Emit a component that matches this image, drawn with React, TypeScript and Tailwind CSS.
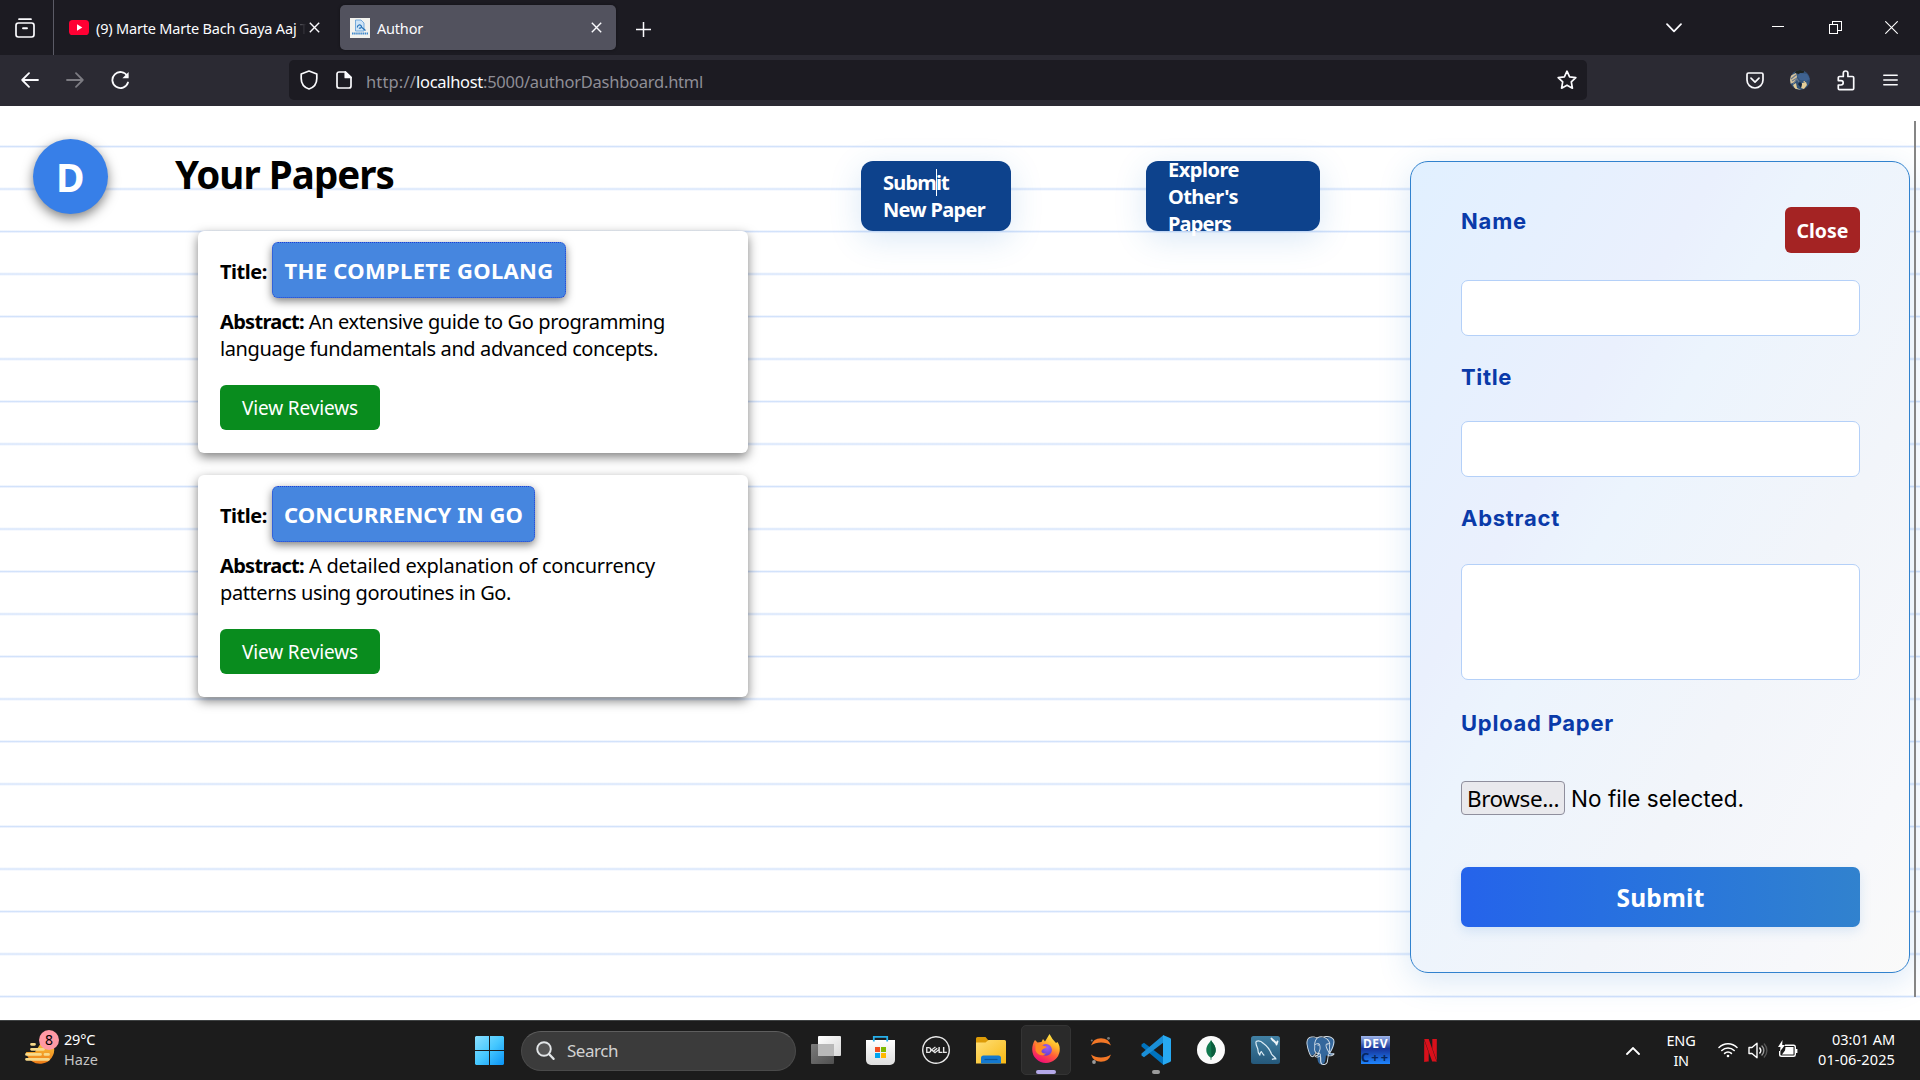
import { useLayoutEffect, useRef } from "react";
import type { ReactNode } from "react";
import { SiDell, SiNetflix, SiPostgresql } from "react-icons/si";

/** One line of text whose tracking is adjusted so that it spans `w` pixels. */
function Fit({ children, w, className = "" }: { children: ReactNode; w: number; className?: string }) {
  const ref = useRef<HTMLSpanElement>(null);
  useLayoutEffect(() => {
    const el = ref.current;
    if (!el) return;
    el.style.letterSpacing = "0px";
    const natural = el.getBoundingClientRect().width;
    const n = (el.textContent || "").length;
    el.style.letterSpacing = `${(w - natural) / n}px`;
  }, [w]);
  return (
    <span ref={ref} className={`inline-block whitespace-pre ${className}`}>
      {children}
    </span>
  );
}

const NOTO = "font-['Noto_Sans','Open_Sans',sans-serif]";
const INTER = "font-['Inter',sans-serif]";

function TabBar() {
  return (
    <div className="flex h-[55px] items-center bg-[#1c1b22] text-[#fbfbfe]">
      <div className="flex h-full w-[54px] items-center border-r border-[#5b5b66] pl-[15px]">
        <svg width="20" height="20" viewBox="0 0 20 20" fill="none" stroke="currentColor" strokeWidth="1.7" strokeLinecap="round" className="mt-[1px]">
          <path d="M4 1.2h12" />
          <rect x="1" y="5" width="18" height="14" rx="2.4" />
          <path d="M8 10.2h4" strokeWidth="1.9" />
        </svg>
      </div>
      <div className="flex h-full w-[286px] items-center pl-[15px]">
        <svg width="20" height="15" viewBox="0 0 20 15">
          <rect width="20" height="15" rx="3.6" fill="#ff0033" />
          <path d="M8 4.3v6.4l5.3-3.2z" fill="#fff" />
        </svg>
        <div className="ml-[7px] flex w-[211px] pt-[1px] text-[14.500px] leading-[20px]">
          <Fit w={204}>(9) Marte Marte Bach Gaya Aaj </Fit>
          <span className="bg-linear-to-r from-[#5a5960] to-[#1c1b22] to-80% bg-clip-text text-transparent">T</span>
        </div>
        <svg width="11" height="11" viewBox="0 0 11 11" stroke="currentColor" strokeWidth="1.4" className="ml-[2px]">
          <path d="M.8.8l9.4 9.4M10.2.8L.8 10.2" />
        </svg>
      </div>
      <div className="flex h-[45px] w-[276px] items-center rounded-[5px] bg-[#52525e] pl-[10px] pr-[14px] shadow-[0_0_3px_rgba(0,0,0,0.4)]">
        <svg width="20" height="20" viewBox="0 0 20 20">
          <rect width="20" height="20" fill="#f2f2ee" />
          <path d="M5.5 2h5.500l3 3v8H5.5z" fill="#cfe4f6" stroke="#5b9bd5" strokeWidth=".8" />
          <path d="M7.500 9.500a2 2 0 114-1c0 1.500-1.500 2-2.500 1.500M12 9.500l3.500 3" fill="none" stroke="#2673b8" strokeWidth="1.200" />
          <path d="M2 15.500h16" stroke="#3f88cb" strokeWidth="1.800" strokeDasharray="1.500 .6" />
        </svg>
        <Fit w={46} className="ml-[7px] pt-[1px] text-[14.500px] leading-[20px]">Author</Fit>
        <svg width="11" height="11" viewBox="0 0 11 11" stroke="currentColor" strokeWidth="1.4" className="ml-auto">
          <path d="M.8.8l9.4 9.4M10.2.8L.8 10.2" />
        </svg>
      </div>
      <svg width="15" height="15" viewBox="0 0 15 15" stroke="currentColor" strokeWidth="1.500" className="ml-[20px] mt-[3px]">
        <path d="M7.500 0v15M0 7.500h15" />
      </svg>
      <div className="ml-auto flex items-center pr-[22px]">
        <svg width="16" height="10" viewBox="0 0 16 10" fill="none" stroke="currentColor" strokeWidth="1.700" strokeLinecap="round" strokeLinejoin="round">
          <path d="M1 1.200l7 7.200 7-7.200" />
        </svg>
        <div className="ml-[90px] mb-[2px] h-px w-[12px] bg-white" />
        <svg width="13" height="13" viewBox="0 0 13 13" fill="none" stroke="#fff" className="ml-[45px]" shapeRendering="crispEdges">
          <path d="M.5 3.500h8v9h-8zM3.500 3.500v-3h9v9h-4" />
        </svg>
        <svg width="13" height="13" viewBox="0 0 13 13" stroke="#fff" strokeWidth="1.100" className="ml-[43px]">
          <path d="M.3.300l12.400 12.400M12.700.300L.300 12.700" />
        </svg>
      </div>
    </div>
  );
}

function NavBar() {
  return (
    <div className="flex h-[51px] items-center bg-[#2b2a33] pb-[1px] text-[#fbfbfe]">
      <svg width="18" height="16" viewBox="0 0 18 16" fill="none" stroke="currentColor" strokeWidth="1.800" strokeLinecap="round" strokeLinejoin="round" className="ml-[21px]">
        <path d="M17 8H1.200M8 1.200L1.200 8 8 14.800" />
      </svg>
      <svg width="18" height="16" viewBox="0 0 18 16" fill="none" stroke="#7c7b82" strokeWidth="1.800" strokeLinecap="round" strokeLinejoin="round" className="ml-[27px]">
        <path d="M1 8h15.800M10 1.200L16.800 8 10 14.800" />
      </svg>
      <svg width="19" height="19" viewBox="0 0 19 19" fill="none" stroke="currentColor" strokeWidth="1.800" strokeLinecap="round" className="ml-[27px]">
        <path d="M16.300 5A8 8 0 1017 11.500" />
        <path d="M17.600 1v6.200h-6.200z" fill="currentColor" stroke="none" />
      </svg>
      <div className="ml-[159px] flex h-[40px] w-[1298px] items-center rounded-[5px] bg-[#1c1b22] pl-[11px] pr-[10px]">
        <svg width="18" height="20" viewBox="0 0 18 20" fill="none" stroke="currentColor" strokeWidth="1.700" strokeLinejoin="round">
          <path d="M9 1l7.800 3v4.500C16.800 13.500 13.500 17.500 9 19 4.500 17.500 1.200 13.500 1.200 8.500V4z" />
        </svg>
        <svg width="16" height="18" viewBox="0 0 16 18" fill="none" stroke="currentColor" strokeWidth="1.700" strokeLinejoin="round" className="ml-[18px]">
          <path d="M3 1h6.500L15 6.300V15a2 2 0 01-2 2H3a2 2 0 01-2-2V3a2 2 0 012-2z" />
          <path d="M9.300 1v5.500H15z" fill="currentColor" />
        </svg>
        <span className="ml-[14px] pt-[4px] text-[16.500px] leading-[22px] text-[#8f8e96]">
          <Fit w={50}>http://</Fit>
          <Fit w={67} className="text-[#fbfbfe]">localhost</Fit>
          <Fit w={220}>:5000/authorDashboard.html</Fit>
        </span>
        <svg width="20" height="20" viewBox="0 0 20 20" fill="none" stroke="currentColor" strokeWidth="1.700" strokeLinejoin="round" className="ml-auto">
          <path d="M10 1.200l2.600 5.600 6.200.8-4.500 4.300 1.100 6.300L10 15.200l-5.400 3 1.100-6.300L1.200 7.600l6.200-.8z" />
        </svg>
      </div>
      <svg width="18" height="17" viewBox="0 0 18 17" fill="none" stroke="currentColor" strokeWidth="1.700" strokeLinecap="round" strokeLinejoin="round" className="ml-[159px]">
        <path d="M2.500 1h13A1.500 1.500 0 0117 2.500V8a8 8 0 01-16 0V2.500A1.500 1.500 0 012.500 1z" />
        <path d="M5 6.200l4 3.900 4-3.900" />
      </svg>
      <svg width="20" height="20" viewBox="0 0 20 20" className="ml-[26px]">
        <clipPath id="av"><circle cx="10" cy="10" r="10" /></clipPath>
        <g clipPath="url(#av)">
          <rect width="20" height="20" fill="#345479" />
          <path d="M6 0h8v2.500L9 4 5 3z" fill="#1f2420" />
          <path d="M0 6l6-3 1 4-2 5-5 2z" fill="#d6c39b" />
          <path d="M7 6l3-3 7 1 3 5-4 2-6-1z" fill="#3f6390" />
          <path d="M1 9l5-4M2 11l5-3M3 14l4-5 2 3" stroke="#6a7a8c" strokeWidth="1.200" fill="none" />
          <path d="M3 15l3-2 1 5 4 2-6-1zM12 13l4-1 1 3-3 4-3-1z" fill="#e3cd97" />
          <path d="M8 14l2-2 2 2-1 4z" fill="#15263c" />
          <path d="M13 11l2 0 0 2z" fill="#c9b787" />
        </g>
      </svg>
      <svg width="18" height="21" viewBox="0 0 18 21" fill="none" stroke="currentColor" strokeWidth="1.700" strokeLinejoin="round" className="ml-[27px]">
        <path d="M2.500 6.500H6.300V3.300a2.300 2.300 0 014.600 0V6.500H15.500a1.200 1.200 0 011.200 1.200V18.500a1.200 1.200 0 01-1.200 1.200H2.500a1.200 1.200 0 01-1.200-1.200V15H4a2.200 2.200 0 000-4.400H1.300V7.700A1.200 1.200 0 012.500 6.500z" />
      </svg>
      <svg width="15" height="12" viewBox="0 0 15 12" stroke="currentColor" strokeWidth="1.500" strokeLinecap="round" className="mb-[1px] ml-[28px]">
        <path d="M.8 1.200h13.400M.8 6h13.400M.8 10.800h13.400" />
      </svg>
    </div>
  );
}

type Paper = { title: string; titleW: number; pillW: string; lines: [string, number][] };

const papers: Paper[] = [
  {
    title: "THE COMPLETE GOLANG",
    titleW: 269,
    pillW: "w-[294px]",
    lines: [
      [" An extensive guide to Go programming", 361],
      ["language fundamentals and advanced concepts.", 438],
    ],
  },
  {
    title: "CONCURRENCY IN GO",
    titleW: 239,
    pillW: "w-[263px]",
    lines: [
      [" A detailed explanation of concurrency", 351],
      ["patterns using goroutines in Go.", 291],
    ],
  },
];

function PaperCard({ paper }: { paper: Paper }) {
  return (
    <article className="h-[222px] w-[550px] rounded-[6px] bg-white pl-[22px] pt-[11px] shadow-[0_4px_11px_rgba(0,0,0,0.5)]">
      <div className="flex items-center">
        <Fit w={47} className="pt-[2px] text-[20px] font-bold leading-[27px]">Title:</Fit>
        <div className={`ml-[5px] flex h-[56px] items-center justify-center rounded-[6px] border border-dotted border-[#1d3fd8] bg-[#4686df] pt-[1px] text-white shadow-[0_3px_8px_rgba(0,0,0,0.5)] ${paper.pillW}`}>
          <Fit w={paper.titleW} className="text-[22px] font-bold leading-[27px]">{paper.title}</Fit>
        </div>
      </div>
      <p className="mt-[10px] text-[20px] leading-[27px]">
        <Fit w={84} className="font-bold">Abstract:</Fit>
        <Fit w={paper.lines[0][1]}>{paper.lines[0][0]}</Fit>
        <br />
        <Fit w={paper.lines[1][1]}>{paper.lines[1][0]}</Fit>
      </p>
      <button className="mt-[23px] flex h-[45px] w-[160px] items-center justify-center rounded-[6px] bg-[#098c1e] pt-[2px] text-[19px] text-white">
        <Fit w={116}>View Reviews</Fit>
      </button>
    </article>
  );
}

function FieldLabel({ children, w }: { children: string; w: number }) {
  return (
    <Fit w={w} className="pt-[1px] text-[22px] font-bold leading-[27px] text-[#0a3aa9]">{children}</Fit>
  );
}

function PaperForm() {
  return (
    <form
      className={`ml-[90px] mt-[55px] flex h-[812px] w-[500px] shrink-0 flex-col rounded-[18px] border border-[#3182ce] pl-[50px] pr-[49px] pt-[45px] shadow-[0_8px_32px_rgba(49,130,206,0.18)] bg-[linear-gradient(120deg,#e1f0ff_0%,#eaf0fd_32%,#ecf4fd_42%,#f2f5fa_66%,#f7f8fb_88%,#fafaf9_100%)] ${INTER}`}
    >
      <div className="flex h-[46px] items-start justify-between">
        <FieldLabel w={66}>Name</FieldLabel>
        <button type="button" className={`flex h-[46px] w-[75px] items-center justify-center rounded-[6px] bg-[#a42323] pt-[1px] text-[19.500px] font-bold text-white ${NOTO}`}>
          <Fit w={52}>Close</Fit>
        </button>
      </div>
      <div className="mt-[27px] h-[56px] shrink-0 rounded-[7px] border border-[#b4d0f8] bg-white" />
      <div className="mt-[27px] h-[27px]"><FieldLabel w={51}>Title</FieldLabel></div>
      <div className="mt-[31px] h-[56px] shrink-0 rounded-[7px] border border-[#b4d0f8] bg-white" />
      <div className="mt-[27px] h-[27px]"><FieldLabel w={99}>Abstract</FieldLabel></div>
      <div className="mt-[33px] h-[116px] shrink-0 rounded-[7px] border border-[#b4d0f8] bg-white" />
      <div className="mt-[29px] h-[27px]"><FieldLabel w={153}>Upload Paper</FieldLabel></div>
      <div className="mt-[45px] flex h-[34px] items-center text-[22.500px] leading-[30px] text-black">
        <div className={`flex h-[34px] w-[104px] items-center justify-center rounded-[4px] border border-[#8f8f9d] bg-[#e9e9ed] pt-[1px] ${NOTO}`}>
          <Fit w={92}>Browse...</Fit>
        </div>
        <Fit w={173} className="ml-[6px] pt-[2px]">No file selected.</Fit>
      </div>
      <button type="button" className={`mt-[52px] flex h-[60px] shrink-0 items-center justify-center rounded-[7px] bg-linear-to-r from-[#2563eb] to-[#3182ce] pt-[3px] text-[24.500px] font-bold text-white shadow-[0_4px_12px_rgba(49,130,206,0.15)] ${NOTO}`}>
        <Fit w={88}>Submit</Fit>
      </button>
    </form>
  );
}

function Page() {
  return (
    <main
      className="relative flex h-[914px] items-start overflow-hidden bg-white text-black bg-[position:0_39px] bg-[size:100%_42.5px] bg-[linear-gradient(transparent_0px,#d2e2fb_1.5px,#dbe8fc_2px,transparent_3px)]"
    >
      <div className="ml-[33px] mt-[33px] flex h-[75px] w-[75px] shrink-0 items-center justify-center rounded-full bg-[#377fe8] pt-[1px] text-[39px] font-bold text-white shadow-[0_4px_12px_rgba(0,0,0,0.5)]">
        <Fit w={29}>D</Fit>
      </div>
      <section className="ml-[67px] mt-[44px] w-[573px] shrink-0">
        <h1 className="h-[48px] text-[38.500px] font-bold leading-[49px]"><Fit w={219}>Your Papers</Fit></h1>
        <div className="ml-[23px] mt-[33px] flex flex-col gap-[22px]">
          {papers.map((p) => <PaperCard key={p.title} paper={p} />)}
        </div>
      </section>
      <button className="relative ml-[113px] mt-[55px] flex h-[70px] w-[150px] shrink-0 flex-col items-start justify-center rounded-[12px] bg-[#0d428c] pl-[22px] text-[20px] font-bold leading-[27px] text-white shadow-[0_8px_32px_rgba(49,130,206,0.18)]">
        <Fit w={66}>Submit</Fit>
        <Fit w={102}>New Paper</Fit>
        <span className="absolute left-[75px] top-[8px] h-[27px] w-px bg-white" />
      </button>
      <button className="ml-[135px] mt-[55px] flex h-[70px] w-[174px] shrink-0 flex-col items-start justify-center rounded-[12px] bg-[#0d428c] pl-[22px] text-[20px] font-bold leading-[27px] text-white shadow-[0_8px_32px_rgba(49,130,206,0.18)]">
        <Fit w={71}>Explore</Fit>
        <Fit w={70}>Other's</Fit>
        <Fit w={63}>Papers</Fit>
      </button>
      <PaperForm />
      <div className="ml-[4px] mt-[15px] h-[876px] w-[2px] bg-[#858585]" />
    </main>
  );
}

function Slot({ children, active = false }: { children: ReactNode; active?: boolean }) {
  return (
    <div className={`relative flex h-[50px] w-[50px] items-center justify-center rounded-[5px] ${active ? "border border-[#343434] bg-[#2a2a2a]" : ""}`}>
      {children}
    </div>
  );
}

function Taskbar() {
  return (
    <footer className="flex h-[60px] items-center border-t border-[#3f4243] bg-[#1c1c1c] text-[15px] leading-[20px] text-white">
      <div className="flex w-[475px] items-center pb-[4px] pl-[25px]">
        <div className="relative mb-[2px] h-[36px] w-[34px]">
          <svg width="34" height="36" viewBox="0 0 34 36">
            <defs><linearGradient id="sun" x1="0" y1="0" x2="0" y2="1"><stop offset="0" stopColor="#f8c33a" /><stop offset="1" stopColor="#ee7a16" /></linearGradient></defs>
            <path d="M1 22a14 14 0 0028-5V13H16L10 22z" fill="url(#sun)" />
            <g stroke="#f7d98a" strokeWidth="2.800" strokeLinecap="round"><path d="M6.500 14.300h3M6.500 19.300h12M1.500 24.400h14M20 24.400h3.500M1.500 29.300h22" /></g>
          </svg>
          <span className="absolute left-[14px] top-[0px] flex h-[20px] w-[20px] items-center justify-center rounded-full bg-[#ff99a4] text-[14px] text-black">8</span>
        </div>
        <div className="ml-[5px] flex flex-col text-[14.500px]">
          <Fit w={33}>29°C</Fit>
          <Fit w={34} className="text-[#c4c4c4]">Haze</Fit>
        </div>
      </div>
      <svg width="29" height="29" viewBox="0 0 29 29">
        <defs><linearGradient id="win" x1="0" y1="0" x2="1" y2="1"><stop offset="0" stopColor="#8be0ff" /><stop offset=".5" stopColor="#46c8ff" /><stop offset="1" stopColor="#0a93f5" /></linearGradient></defs>
        <path d="M1 0h13v14H0V1zM15 0h13l1 1v13H15zM0 15h14v14H1l-1-1zM15 15h14v13l-1 1H15z" fill="url(#win)" />
      </svg>
      <div className="ml-[17px] flex h-[40px] w-[275px] items-center rounded-full border border-[#4a4a4a] border-t-[#5e5e5e] bg-[#3b3b3b] pl-[14px]">
        <svg width="19" height="19" viewBox="0 0 19 19" fill="none" stroke="#e2e5e7" strokeLinecap="round">
          <circle cx="8" cy="8" r="6.800" strokeWidth="1.900" fill="#555" />
          <path d="M13.200 13.200l4.300 4.600" strokeWidth="2.400" />
        </svg>
        <Fit w={51} className="ml-[12px] text-[17px] text-[#d2d2d2]">Search</Fit>
      </div>
      <div className="ml-[5px] flex gap-[5px] pb-[1px]">
        <Slot>
          <svg width="30" height="28" viewBox="0 0 30 28">
            <defs>
              <linearGradient id="tv" x1="0" y1="0" x2="1" y2="1"><stop offset="0" stopColor="#fff" /><stop offset="1" stopColor="#d8d8d8" /></linearGradient>
              <linearGradient id="tv2" x1="0" y1="0" x2="1" y2="1"><stop offset="0" stopColor="#7a7a7a" /><stop offset="1" stopColor="#505050" /></linearGradient>
            </defs>
            <rect y="8" width="23" height="20" rx="1" fill="url(#tv2)" />
            <rect x="7" width="23" height="20" rx="1" fill="url(#tv)" />
            <rect x="7" y="8" width="16" height="12" fill="#b8b8b8" />
          </svg>
        </Slot>
        <Slot>
          <svg width="29" height="29" viewBox="0 0 29 29" className="mr-[2px]">
            <defs><linearGradient id="st" x1="0" y1="0" x2="0" y2="1"><stop offset="0" stopColor="#fff" /><stop offset="1" stopColor="#dedede" /></linearGradient></defs>
            <path d="M0 4h29v20a5 5 0 01-5 5H5a5 5 0 01-5-5z" fill="url(#st)" />
            <path d="M7.800 5.500V.8h13.400v4.700" fill="none" stroke="#27b0ea" strokeWidth="1.800" />
            <path d="M9 11h5v5H9z" fill="#f25022" /><path d="M15 11h5v5h-5z" fill="#7fba00" /><path d="M9 17h5v5H9z" fill="#00a4ef" /><path d="M15 17h5v5h-5z" fill="#ffb900" />
          </svg>
        </Slot>
        <Slot><SiDell size={28} color="#e8e8e8" /></Slot>
        <Slot>
          <svg width="30" height="27" viewBox="0 0 30 27">
            <defs><linearGradient id="fo" x1="0" y1="0" x2="1" y2="1"><stop offset="0" stopColor="#ffdf77" /><stop offset="1" stopColor="#f7b813" /></linearGradient></defs>
            <path d="M0 1.500A1.500 1.500 0 011.500 0h8l3 3.500V8H0z" fill="#dd9b07" />
            <path d="M0 5.500h9.500L12.500 3H28.500A1.500 1.500 0 0130 4.500V26.500H0z" fill="url(#fo)" />
            <path d="M5 26.500V21a2.500 2.500 0 012.500-2.500H22.500A2.500 2.500 0 0125 21v5.500z" fill="#1479d0" />
            <path d="M8.500 22.500h13" stroke="#0b559b" strokeWidth="1.200" />
          </svg>
        </Slot>
        <Slot active>
          <svg width="30" height="30" viewBox="0 0 30 30" className="mb-[2px]">
            <defs>
              <linearGradient id="ff" x1=".8" y1="0" x2=".3" y2="1"><stop offset="0" stopColor="#fff04a" /><stop offset=".35" stopColor="#ffb22a" /><stop offset=".62" stopColor="#ff5a3a" /><stop offset="1" stopColor="#f0087a" /></linearGradient>
              <radialGradient id="fp" cx=".6" cy=".3" r=".8"><stop offset="0" stopColor="#a060f0" /><stop offset="1" stopColor="#5a3bd0" /></radialGradient>
            </defs>
            <path d="M4 6l2.500 2.500 4-.5 1.500-3 2 2.500L18.500 0l3 5 3.500 4 1.500-1c2 3 2.500 5.500 2.200 9A13.800 13.800 0 0115 29 13.600 13.600 0 011.200 15.500C1.200 12 2.200 8.500 4 6z" fill="url(#ff)" />
            <circle cx="15" cy="15.800" r="5.900" fill="url(#fp)" />
            <path d="M4.500 10c3 0 5 .3 7.500 1.500 1.500.7 3.500.5 3.500 1.600 0 1.200-3 1.400-4.200 2.700C9 18 12 20 15 19.500c-3 3.500-9 1.500-10.500-3z" fill="#ff8a24" />
          </svg>
          <span className="absolute bottom-0 left-[14px] h-[4px] w-[20px] rounded-full bg-[#b5a9e9]" />
        </Slot>
        <Slot>
          <svg width="22" height="28" viewBox="0 0 22 28">
            <path d="M1 9.500a10.500 10.500 0 0120 0c-5-4-15-4-20 0zM1 18.500a10.500 10.500 0 0020 0c-5 4-15 4-20 0z" fill="#f37726" />
            <circle cx="1.800" cy="4.500" r="1" fill="#777" /><circle cx="18.500" cy="2.300" r="1.400" fill="#777" /><circle cx="4" cy="26" r="1.900" fill="#9a9a9a" />
          </svg>
        </Slot>
        <Slot>
          <svg width="30" height="30" viewBox="0 0 30 30">
            <path d="M.5 9.500L3 7.800 22.500 22.500V30L.5 11.500z" fill="#0073be" />
            <path d="M.5 20.500L3 22.300 22.500 7.500V0L.5 18.500z" fill="#1a8fd8" />
            <path d="M22 0l7 3a1.500 1.500 0 011 1.300v21.400a1.500 1.500 0 01-1 1.300l-7 3z" fill="#27a9f2" />
          </svg>
          <span className="absolute bottom-[1px] left-[21px] h-[4px] w-[8px] rounded-full bg-[#9a9a9a]" />
        </Slot>
        <Slot>
          <svg width="28" height="28" viewBox="0 0 28 28">
            <circle cx="14" cy="14" r="14" fill="#fafafa" />
            <path d="M14 4c1 2.500 4.700 5 4.700 10 0 4-2.700 6.500-4.200 7.500L14.300 24h-.6l-.2-2.500C12 20.500 9.300 18 9.300 14 9.300 9 13 6.500 14 4z" fill="#10784e" />
            <path d="M14 4c1 2.500 4.700 5 4.700 10 0 4-2.700 6.500-4.200 7.500z" fill="#0a5c3c" />
          </svg>
        </Slot>
        <Slot>
          <svg width="29" height="28" viewBox="0 0 29 28" className="mr-[1px]">
            <defs><linearGradient id="my" x1="0" y1="0" x2="0" y2="1"><stop offset="0" stopColor="#4180a3" /><stop offset="1" stopColor="#25587a" /></linearGradient></defs>
            <rect width="29" height="28" rx="2.500" fill="url(#my)" />
            <path d="M5 5.500c3-1.500 5.500 0 7.500 2 5 3.500 6.500 6.500 8 10.500 1 2 3 2 4.500 5-2 0-3-.5-4 .5M5 5.500c-.5 3 1 5 1.800 7.500 0 2 .5 4.500 2 6 .5-1.500.5-3 1.500-3.500 1 1.500 1.500 3 3 4" fill="none" stroke="#dcecf5" strokeWidth="1.200" strokeLinejoin="round" />
            <path d="M20.500 2.500l1.500 2M22 4l3.500 3.500M26.500 5.500l-1 3" stroke="#eef5f9" strokeWidth="1.900" strokeLinecap="round" />
          </svg>
        </Slot>
        <Slot>
          <div className="relative mr-[2px] h-[29px] w-[29px]">
            <svg width="29" height="29" viewBox="0 0 29 29" fill="#34679c">
              <path d="M9.500 1.800C4 0 .5 3 .8 8c.2 4 3 11.500 5.500 11.500 1.500 0 3-2.500 4-4l1 1c0 3-.5 12 4 12 4.500 0 4.200-6 4.700-9 2.500 1 6.500 0 7.500-2-1-.7-2-.5-3.500-.5 2-2.500 4.200-6.500 4.500-10C29 2.500 24 0 19 1.800c-3-.8-6-.8-9.500 0z" />
            </svg>
            <SiPostgresql size={29} color="#d5dfe8" className="absolute inset-0" />
          </div>
        </Slot>
        <Slot>
          <div className="mr-[1px] flex h-[28px] w-[29px] flex-col items-center bg-linear-to-b from-[#9fb4e8] via-[#16339a] via-45% to-[#1f86ff] font-bold">
            <Fit w={25} className="h-[15px] text-[12px] leading-[16px] text-white">DEV</Fit>
            <Fit w={29} className="h-[13px] text-[13px] leading-[13px] text-[#06265e]">C++</Fit>
          </div>
        </Slot>
        <Slot><SiNetflix size={23} color="#d8101b" className="mr-[2px]" /></Slot>
      </div>
      <div className="ml-auto flex h-full items-center pr-[25px]">
        <svg width="14" height="8" viewBox="0 0 14 8" fill="none" stroke="#fff" strokeWidth="1.800" strokeLinecap="round"><path d="M1 7l6-6 6 6" /></svg>
        <div className="ml-[27px] flex w-[28px] flex-col items-center pb-[2px] text-[14.500px]">
          <Fit w={29}>ENG</Fit>
          <Fit w={15}>IN</Fit>
        </div>
        <svg width="20" height="16" viewBox="0 0 20 16" fill="none" stroke="#fff" strokeWidth="1.500" strokeLinecap="round" className="mb-[2px] ml-[23px]">
          <path d="M1 5.500a12.500 12.500 0 0118 0M3.800 8.500a8.800 8.800 0 0112.400 0M6.600 11.400a4.800 4.800 0 016.800 0" />
          <circle cx="10" cy="14" r="1.300" fill="#fff" stroke="none" />
        </svg>
        <svg width="20" height="17" viewBox="0 0 20 17" fill="none" stroke="#fff" strokeWidth="1.400" strokeLinecap="round" strokeLinejoin="round" className="mb-[1px] ml-[10px]">
          <path d="M1 5.500h3L9 1.300v14.400L4 11.500H1z" />
          <path d="M11.800 6a4 4 0 010 5" />
          <path d="M14 4a6.500 6.500 0 010 9" stroke="#9a9a9a" />
          <path d="M16.300 2a9.500 9.500 0 010 13" stroke="#555" />
        </svg>
        <svg width="20" height="18" viewBox="0 0 20 18" fill="none" stroke="#fff" strokeWidth="1.400" className="mb-[3px] ml-[10px]">
          <path d="M7 5.200h8.500a1.800 1.800 0 011.800 1.800v7.500a1.800 1.800 0 01-1.800 1.800H3.500a1.800 1.800 0 01-1.800-1.800V11" />
          <path d="M7.500 7h8v7.500H4l3-4z" fill="#fff" stroke="none" />
          <path d="M18.300 9v4" strokeWidth="2.200" />
          <path d="M4.500 0L0 7h2.500L2 11.500 7 5H4.200z" fill="#fff" stroke="none" />
        </svg>
        <div className="ml-[21px] flex w-[76px] flex-col items-end pb-[4px] text-[14.500px]">
          <Fit w={63}>03:01 AM</Fit>
          <Fit w={77}>01-06-2025</Fit>
        </div>
      </div>
    </footer>
  );
}

export default function App() {
  return (
    <div className={`h-[1080px] w-[1920px] overflow-hidden bg-white ${NOTO}`}>
      <TabBar />
      <NavBar />
      <Page />
      <Taskbar />
    </div>
  );
}
